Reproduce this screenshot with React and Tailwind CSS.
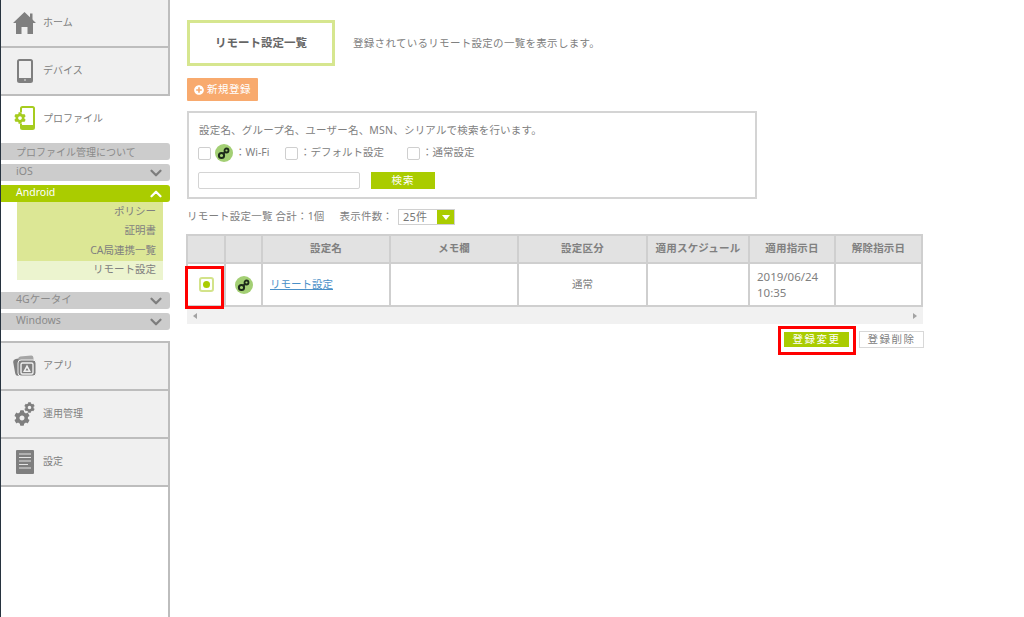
import { ChevronDown, ChevronUp } from "lucide-react";
import { FaCog, FaPlusCircle } from "react-icons/fa";

const font = { fontFamily: '"Noto Sans", "Noto Sans CJK JP", sans-serif' };

const WifiIcon = ({ size = 18 }) => (
  <svg width={size} height={size} viewBox="0 0 18 18">
    <circle cx="9" cy="9" r="9" fill="#a3cf74" />
    <circle cx="6.5" cy="11.5" r="2.6" fill="none" stroke="#1d2a1a" strokeWidth="2" />
    <circle cx="11.5" cy="6.5" r="2" fill="none" stroke="#1d2a1a" strokeWidth="1.8" />
    <path d="M8.4 9.6 10 8" stroke="#1d2a1a" strokeWidth="2" />
  </svg>
);

const HomeIcon = () => (
  <svg width="23" height="22" viewBox="0 0 23 22">
    <path d="M11.500 0 23 11h-3v11h-5.500v-7h-6v7H3V11H0Z" fill="#7f7f7f" />
    <path d="M17 1.500h2.500V8H17Z" fill="#7f7f7f" />
  </svg>
);

const DeviceIcon = () => (
  <svg width="16" height="24" viewBox="0 0 16 24">
    <rect x="1" y="1" width="14" height="22" rx="1.5" fill="none" stroke="#7f7f7f" strokeWidth="2" />
    <rect x="1" y="19" width="14" height="4" fill="#7f7f7f" />
    <circle cx="8" cy="21" r="0.8" fill="#f0f0f0" />
  </svg>
);

const ProfileIcon = () => (
  <div className="relative w-[21px] h-[24px]">
    <svg width="21" height="24" viewBox="0 0 21 24">
      <rect x="7" y="1" width="13" height="22" rx="1.5" fill="#fff" stroke="#a6cc1f" strokeWidth="2" />
      <rect x="7" y="19" width="13" height="4" fill="#a6cc1f" />
    </svg>
    <span className="absolute left-0 top-[6px] w-[12px] h-[12px] rounded-full bg-white" />
    <FaCog size={12} className="absolute left-0 top-[6px] text-[#a6cc1f]" />
  </div>
);

const AppIcon = () => (
  <svg width="24" height="22" viewBox="0 0 24 22">
    <rect x="1" y="3" width="16" height="17" rx="3" fill="#7f7f7f" transform="rotate(-10 9 11)" />
    <rect x="6" y="1" width="15" height="16" rx="2" fill="#a5a5a5" transform="rotate(-6 13 9)" />
    <rect x="5" y="5" width="18" height="16" rx="3" fill="#7f7f7f" stroke="#f0f0f0" />
    <rect x="8" y="8" width="12" height="11" rx="1.5" fill="none" stroke="#f0f0f0" strokeWidth="1.4" />
    <path d="M14 9.500 10 17h8ZM14 13l-1.500 2.500h3Z" fill="#f0f0f0" fillRule="evenodd" />
  </svg>
);

const GearsIcon = () => (
  <div className="relative w-[21px] h-[24px]">
    <FaCog size={16} className="absolute left-0 bottom-0 text-[#7f7f7f]" />
    <FaCog size={11} className="absolute right-0 top-0 text-[#7f7f7f]" />
  </div>
);

const SettingIcon = () => (
  <svg width="18" height="24" viewBox="0 0 18 24">
    <rect width="18" height="24" rx="1" fill="#7f7f7f" />
    <path d="M3 4h12M3 7.500h12M3 11h12M3 14.500h9M3 18h12" stroke="#e4e4e4" strokeWidth="1" />
  </svg>
);

const NavItem = ({ icon, label, active }) => (
  <div className={`h-[48px] flex items-center ${active ? "bg-white pb-[4px]" : "bg-[#f0f0f0] pb-[1px] border-b-2 border-r-2 border-[#bdbdbd]"}`}>
    <div className="w-[42px] flex justify-center pl-[5px] shrink-0">{icon}</div>
    <span className="text-[10px] text-[#808080]">{label}</span>
  </div>
);

const MenuBar = ({ label, open, plain, green }) => (
  <div className={`h-[17px] rounded-r-[3px] flex items-center justify-between pl-[15px] pr-[5px] text-[10.5px] leading-none ${green ? "bg-[#aacc00] text-white" : "bg-[#cccccc] text-[#8a8a8a]"}`}>
    <span className={plain ? "text-[10px]" : "pb-[2px]"}>{label}</span>
    {!plain && (open
      ? <ChevronUp size={18} strokeWidth={3} className="text-white" />
      : <ChevronDown size={18} strokeWidth={3} className="text-[#7d7d7d]" />)}
  </div>
);

const SubItem = ({ label, current }) => (
  <div className={`h-[19.500px] flex items-center justify-end pr-[7px] text-[10.5px] text-[#808080] ${current ? "bg-[#ecf4cf]" : ""}`}>
    {label}
  </div>
);

const Check = () => <span className="w-[13px] h-[13px] border border-[#cfcfcf] rounded-[2px] bg-white shrink-0" />;

const headers = ["", "", "設定名", "メモ欄", "設定区分", "適用スケジュール", "適用指示日", "解除指示日"];
const widths = ["w-[38px]", "w-[37px]", "w-[128px]", "w-[128px]", "w-[129px]", "w-[102px]", "w-[86px]", "w-[87px]"];

export default function App() {
  return (
    <div className="flex h-[617px] w-[1024px] bg-white overflow-hidden relative" style={font}>
      <aside className="w-[170px] h-full shrink-0 flex flex-col border-l border-l-[#27333f]">
        <NavItem icon={<HomeIcon />} label="ホーム" />
        <NavItem icon={<DeviceIcon />} label="デバイス" />
        <NavItem icon={<ProfileIcon />} label="プロファイル" active />
        <div className="flex flex-col gap-[4px] mt-[-1px]">
          <MenuBar label="プロファイル管理について" plain />
          <MenuBar label="iOS" />
          <div>
            <MenuBar label="Android" open green />
            <div className="ml-[16px] mr-[7px] bg-[#dce795]">
              <SubItem label="ポリシー" />
              <SubItem label="証明書" />
              <SubItem label="CA局連携一覧" />
              <SubItem label="リモート設定" current />
            </div>
          </div>
          <div className="mt-[8px]"><MenuBar label="4Gケータイ" /></div>
          <MenuBar label="Windows" />
        </div>
        <div className="mt-[11px] border-t-2 border-[#bdbdbd] flex-1 flex flex-col">
          <NavItem icon={<AppIcon />} label="アプリ" />
          <NavItem icon={<GearsIcon />} label="運用管理" />
          <NavItem icon={<SettingIcon />} label="設定" />
          <div className="flex-1 border-r-2 border-[#bdbdbd]" />
        </div>
      </aside>

      <main className="flex-1 pl-[17px] pt-[20px] text-[#808080]">
        <div className="flex items-center">
          <h1 className="w-[148px] h-[46px] border-[3px] border-[#d6e68f] flex items-center justify-center text-[11.5px] font-bold text-[#666]">
            リモート設定一覧
          </h1>
          <p className="ml-[18px] mt-[1px] text-[10.5px] tracking-[0.3px]">登録されているリモート設定の一覧を表示します。</p>
        </div>

        <button className="mt-[12px] w-[71px] h-[23px] bg-[#f8aa6e] text-white text-[10.5px] tracking-[0.5px] flex items-center justify-center gap-[3px] rounded-[1px]">
          <FaPlusCircle size={10} />新規登録
        </button>

        <section className="mt-[10px] w-[570px] h-[88px] border-2 border-[#d4d4d4] pl-[9px] pt-[10px] text-[10.5px]">
          <p className="pl-[1px] leading-[14px] tracking-[0.2px]">設定名、グループ名、ユーザー名、MSN、シリアルで検索を行います。</p>
          <div className="flex items-center mt-[7px] h-[18px]">
            <Check />
            <span className="ml-[4px]"><WifiIcon /></span>
            <span className="ml-[2px] w-[50px]">：Wi-Fi</span>
            <Check />
            <span className="ml-[2px] w-[107px]">：デフォルト設定</span>
            <Check />
            <span className="ml-[2px]">：通常設定</span>
          </div>
          <div className="flex items-center mt-[10px]">
            <input className="w-[162px] h-[17px] border border-[#d4d4d4] rounded-[2px] bg-white" />
            <button className="ml-[11px] w-[64px] h-[17px] bg-[#aacc00] text-white text-[10.5px] tracking-[1px] leading-none">検索</button>
          </div>
        </section>

        <div className="flex items-center mt-[10px] h-[16px] text-[10.5px] tracking-[0.2px]">
          <span>リモート設定一覧 合計：1個</span>
          <span className="ml-[15px]">表示件数：</span>
          <div className="ml-[5px] w-[57px] h-[16px] border border-[#d0d0d0] flex items-center text-[11px] text-[#777]">
            <span className="flex-1 pl-[4px]">25件</span>
            <span className="w-[17px] h-full bg-[#aacc00] flex items-center justify-center">
              <span className="w-0 h-0 border-x-[4px] border-x-transparent border-t-[5px] border-t-white" />
            </span>
          </div>
        </div>

        <div className="mt-[9px] w-[736px]">
          <table className="-ml-[1px] w-[736px] table-fixed border-collapse text-[10.5px]">
            <thead>
              <tr className="h-[28px] bg-[#e2e2e2]">
                {headers.map((h, i) => (
                  <th key={i} className={`${widths[i]} border-2 border-[#cfcfcf] font-bold text-[#808080] tracking-[0.2px] p-0`}>{h}</th>
                ))}
              </tr>
            </thead>
            <tbody>
              <tr className="h-[43px]">
                <td className="border-2 border-[#cfcfcf] p-0">
                  <div className="flex justify-center">
                    <span className="w-[15px] h-[15px] border-2 border-[#d3e38a] rounded-[3px] flex items-center justify-center">
                      <span className="w-[7px] h-[7px] rounded-full bg-[#aacc00]" />
                    </span>
                  </div>
                </td>
                <td className="border-2 border-[#cfcfcf] p-0">
                  <div className="flex justify-center"><WifiIcon /></div>
                </td>
                <td className="border-2 border-[#cfcfcf] pl-[7px] text-[10.5px]">
                  <a className="text-[#4a90c8] underline">リモート設定</a>
                </td>
                <td className="border-2 border-[#cfcfcf]" />
                <td className="border-2 border-[#cfcfcf] text-center">通常</td>
                <td className="border-2 border-[#cfcfcf]" />
                <td className="border-2 border-[#cfcfcf] pl-[7px] text-[11.5px] leading-[16px]">2019/06/24<br />10:35</td>
                <td className="border-2 border-[#cfcfcf]" />
              </tr>
            </tbody>
          </table>
          <div className="h-[17px] bg-[#f1f1f1] flex items-center justify-between px-[6px]">
            <span className="w-0 h-0 border-y-[3px] border-y-transparent border-r-[4px] border-r-[#a3a3a3]" />
            <span className="w-0 h-0 border-y-[3px] border-y-transparent border-l-[4px] border-l-[#a3a3a3]" />
          </div>
        </div>

        <div className="w-[737px] flex justify-end items-center gap-[10px] mt-[7px]">
          <button className="w-[65px] h-[15px] bg-[#aacc00] text-white text-[10.5px] leading-none tracking-[1.5px]">登録変更</button>
          <button className="w-[65px] h-[17px] border border-[#d8d8d8] text-[10.5px] leading-none tracking-[1.5px]">登録削除</button>
        </div>
      </main>

      <div className="absolute left-[185px] top-[266px] w-[39px] h-[43px] border-[3px] border-[#ff0000]" />
      <div className="absolute left-[778px] top-[326px] w-[78px] h-[29px] border-[3px] border-[#ff0000]" />
    </div>
  );
}
